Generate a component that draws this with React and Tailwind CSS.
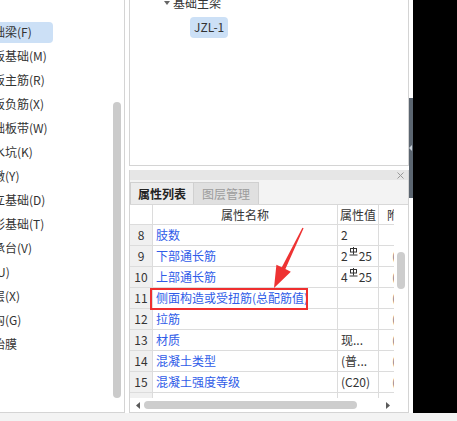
import React from 'react';

const leftItems = [
  { name: '基础梁(F)', active: true },
  { name: '筏板基础(M)' },
  { name: '筏板主筋(R)' },
  { name: '筏板负筋(X)' },
  { name: '基础板带(W)' },
  { name: '集水坑(K)' },
  { name: '柱墩(Y)' },
  { name: '独立基础(D)' },
  { name: '条形基础(T)' },
  { name: '桩承台(V)' },
  { name: '桩(U)' },
  { name: '垫层(X)' },
  { name: '地沟(G)' },
  { name: '砖胎膜' },
];

function RebarMark() {
  return (
    <svg width="9" height="9" viewBox="0 0 9 9" className="mx-[1px] mb-[10px]" fill="none" stroke="#333" strokeWidth="1">
      <rect x="1.5" y="1.5" width="6" height="3.5" />
      <path d="M4.5 0v7.5M0.5 8h8" />
    </svg>
  );
}

function Rebar({ n, d }) {
  return (
    <span className="inline-flex items-center">
      {n}
      <RebarMark />
      {d}
    </span>
  );
}

const rows = [
  { no: 8, name: '肢数', value: '2', extra: '' },
  { no: 9, name: '下部通长筋', value: <Rebar n="2" d="25" />, extra: '(' },
  { no: 10, name: '上部通长筋', value: <Rebar n="4" d="25" />, extra: '(' },
  { no: 11, name: '侧面构造或受扭筋(总配筋值)', value: '', extra: '(' },
  { no: 12, name: '拉筋', value: '', extra: '(' },
  { no: 13, name: '材质', value: '现...', extra: '(' },
  { no: 14, name: '混凝土类型', value: '(普...', extra: '(' },
  { no: 15, name: '混凝土强度等级', value: '(C20)', extra: '(' },
  { no: 16, name: '', value: '', extra: '' },
];

export default function App() {
  return (
    <div className="relative w-[457px] h-[421px] overflow-hidden bg-[#f3f3f3] text-[12px] text-[#333] font-['Noto_Sans_CJK_SC',sans-serif]">
      <div className="flex h-[413px] bg-white">
        {/* Left component list */}
        <div className="w-[125px] h-full flex overflow-hidden border-r border-b border-[#d4d4d4]">
          <div className="flex-1 ml-[-24px] pt-[20px]">
            {leftItems.map((item) => (
              <div key={item.name} className="h-[24px] flex items-center whitespace-nowrap">
                <span
                  className={
                    item.active
                      ? 'h-[21px] w-[77px] flex items-center pl-[5px] rounded-[4px] bg-[#cce0f6]'
                      : 'h-[21px] flex items-center pl-[5px]'
                  }
                >
                  {item.name}
                </span>
              </div>
            ))}
          </div>
          <div className="w-[8px] mr-[3px] pt-[102px]">
            <div className="h-[296px] rounded-full bg-[#cbcbcb]" />
          </div>
        </div>

        <div className="w-[4px]" />

        {/* Right column */}
        <div className="w-[280px] flex flex-col">
          {/* Tree */}
          <div className="h-[166px] overflow-hidden border-x border-b border-[#d4d4d4]">
            <div className="mt-[-9px]">
              <div className="h-[24px] flex items-center pl-[34px]">
                <svg width="6" height="4" viewBox="0 0 6 4" className="mr-[3px]">
                  <path d="M0 0h6L3 4z" fill="#666" />
                </svg>
                <span>基础主梁</span>
              </div>
              <div className="h-[24px] flex items-center pl-[60px]">
                <span className="h-[21px] flex items-center px-[4px] rounded-[4px] bg-[#cce0f6]">JZL-1</span>
              </div>
            </div>
          </div>

          <div className="h-[4px]" />

          {/* Properties */}
          <div className="flex-1 flex flex-col border-x border-b border-[#d4d4d4]">
            <div className="h-[10px] bg-[#e6e6e6] flex items-center justify-end pr-[4px]">
              <svg width="7" height="7" viewBox="0 0 7 7" stroke="#9a9a9a" strokeWidth="1">
                <path d="M0.5 0.5l6 6M6.5 0.5l-6 6" />
              </svg>
            </div>
            <div className="h-[24px] bg-[#f3f3f3] flex items-end">
              <div className="w-[64px] h-[22px] flex items-center justify-center bg-[#ececec] border border-b-0 border-[#d0d0d0] font-bold text-[#222]">
                属性列表
              </div>
              <div className="w-[65px] h-[22px] flex items-center justify-center bg-[#e0e0e0] border border-l-0 border-b-0 border-[#d0d0d0] text-[#9c9c9c]">
                图层管理
              </div>
            </div>

            <div className="flex h-[194px] border-t border-[#d8d8d8]">
              <div className="w-[264px] overflow-hidden">
                <div className="h-[20px] flex border-b border-[#dcdcdc]">
                  <div className="w-[23px] border-r border-[#dcdcdc]" />
                  <div className="w-[185px] border-r border-[#dcdcdc] flex items-center justify-center">属性名称</div>
                  <div className="w-[41px] border-r border-[#dcdcdc] flex items-center justify-center whitespace-nowrap">属性值</div>
                  <div className="w-[15px] flex items-center pl-[8px] whitespace-nowrap overflow-hidden">附加</div>
                </div>
                {rows.map((r) => (
                  <div key={r.no} className="h-[21px] flex border-b border-[#dcdcdc]">
                    <div className="w-[23px] bg-[#f0f0f0] border-r border-[#dcdcdc] flex items-center justify-center">
                      {r.no}
                    </div>
                    <div className="w-[185px] border-r border-[#dcdcdc] flex items-center pl-[3px] whitespace-nowrap overflow-hidden text-[#2f5ce8]">
                      {r.name}
                    </div>
                    <div className="w-[41px] border-r border-[#dcdcdc] flex items-center pl-[3px] whitespace-nowrap overflow-hidden">
                      {r.value}
                    </div>
                    <div className="w-[15px] flex items-center pl-[13px] whitespace-nowrap overflow-hidden text-[#777]">
                      {r.extra}
                    </div>
                  </div>
                ))}
              </div>
              <div className="w-[14px] pt-[47px] pl-[3px]">
                <div className="w-[8px] h-[37px] rounded-full bg-[#cdcdcd]" />
              </div>
            </div>

            <div className="h-[14px] flex items-center pl-[6px]">
              <svg width="4" height="7" viewBox="0 0 4 7">
                <path d="M4 0v7L0 3.5z" fill="#5a5a5a" />
              </svg>
              <div className="ml-[4px] w-[213px] h-[8px] rounded-full bg-[#cdcdcd]" />
              <svg width="4" height="7" viewBox="0 0 4 7" className="ml-[29px]">
                <path d="M0 0v7l4-3.5z" fill="#5a5a5a" />
              </svg>
            </div>
          </div>
        </div>

        {/* Splitter strip */}
        <div className="w-[4px] pt-[98px]">
          <div className="h-[100px] bg-[#5b6570] flex items-center">
            <svg width="3" height="6" viewBox="0 0 3 6">
              <path d="M3 0v6L0 3z" fill="#c9d1d9" />
            </svg>
          </div>
        </div>

        <div className="flex-1 bg-black" />
      </div>

      {/* Annotation: red box and arrow */}
      <div className="absolute left-[150px] top-[288px] w-[158px] h-[22px] border-2 border-[#ef2f2f]" />
      <svg className="absolute left-0 top-0 pointer-events-none" width="457" height="421" viewBox="0 0 457 421">
        <polygon
          points="302.4,227.7 281.8,267.3 276.4,264.7 274,288 290.8,271.7 285.4,269.1 303.6,228.3"
          fill="#ee3333"
        />
      </svg>
    </div>
  );
}
